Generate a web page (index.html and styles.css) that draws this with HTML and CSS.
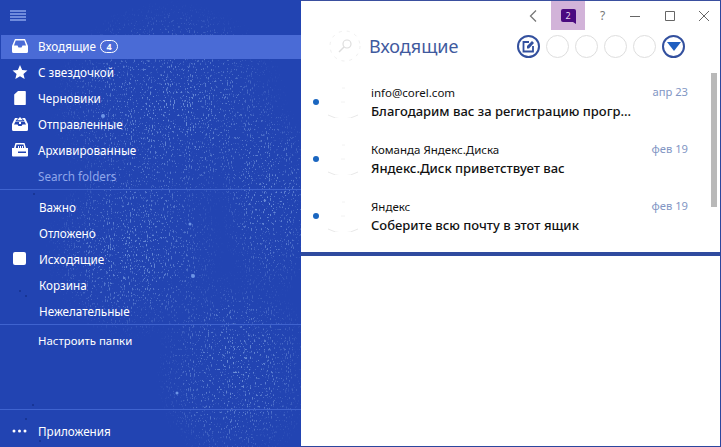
FILE: index.html
```html
<!DOCTYPE html>
<html lang="ru">
<head>
    <meta charset="UTF-8">
    <meta name="viewport" content="width=device-width, initial-scale=1.0">
    <title>Входящие</title>
    <link rel="stylesheet" href="styles.css">
</head>
<body>
<div class="app">

    <aside class="sidebar">
        <svg class="texture" width="301" height="447" aria-hidden="true">
            <defs>
                <filter id="speckle" x="0" y="0" width="100%" height="100%">
                    <feTurbulence type="fractalNoise" baseFrequency="0.95 0.35" numOctaves="2" seed="7"/>
                    <feColorMatrix values="0 0 0 0 0.36  0 0 0 0 0.56  0 0 0 0 0.9  0 0 0 9 -5.6"/>
                </filter>
                <radialGradient id="fade">
                    <stop offset="0" stop-color="#fff"/>
                    <stop offset="0.6" stop-color="#fff" stop-opacity="0.6"/>
                    <stop offset="1" stop-color="#fff" stop-opacity="0"/>
                </radialGradient>
                <mask id="patches">
                    <ellipse cx="170" cy="110" rx="120" ry="110" fill="url(#fade)"/>
                    <ellipse cx="135" cy="250" rx="90" ry="90" fill="url(#fade)"/>
                    <ellipse cx="235" cy="370" rx="80" ry="100" fill="url(#fade)"/>
                    <ellipse cx="270" cy="200" rx="50" ry="100" fill="url(#fade)"/>
                </mask>
            </defs>
            <rect width="301" height="447" filter="url(#speckle)" mask="url(#patches)" opacity="0.6"/>
            <g fill="#6d95e6">
                <circle cx="103" cy="116" r="2"/>
                <circle cx="190" cy="224" r="1.500"/>
                <circle cx="193" cy="276" r="2"/>
                <circle cx="177" cy="393" r="1.500"/>
            </g>
            <g fill="#16308c">
                <circle cx="20" cy="291" r="1"/>
                <circle cx="26" cy="296" r="1"/>
                <circle cx="33" cy="405" r="1"/>
                <circle cx="26" cy="419" r="1"/>
                <circle cx="40" cy="441" r="1"/>
                <circle cx="34" cy="194" r="1"/>
            </g>
        </svg>

        <div class="menu-btn"><span></span><span></span><span></span><span></span></div>

        <nav class="folders">
            <div class="row active">
                <svg class="ico" viewBox="0 0 16 14"><path d="M3 0h10l3 7v5.500a1.500 1.500 0 0 1-1.500 1.500h-13A1.500 1.500 0 0 1 0 12.500V7z M3.700 1.500 2 6.500h3.500l1 2h3l1-2H14l-1.700-5z" fill="#fff" fill-rule="evenodd"/></svg>
                <span>Входящие</span>
                <b class="count">4</b>
            </div>
            <div class="row">
                <svg class="ico" viewBox="0 0 16 15"><path d="M8 0l2.300 5.300 5.700.5-4.300 3.800 1.300 5.400L8 12.100 3 15l1.300-5.400L0 5.800l5.700-.5z" fill="#fff"/></svg>
                <span>С звездочкой</span>
            </div>
            <div class="row">
                <svg class="ico" viewBox="0 0 16 14"><path d="M6 0h7a.8.800 0 0 1 .8.800v12.400a.8.800 0 0 1-.8.800H3a.8.800 0 0 1-.8-.800V3.500z" fill="#fff"/></svg>
                <span>Черновики</span>
            </div>
            <div class="row">
                <svg class="ico" viewBox="0 0 16 14"><path d="M3 1h3L3.500 4 7 4v3h2V4h3.500L10 1h3l3 6v5.500a1.500 1.500 0 0 1-1.500 1.500h-13A1.500 1.500 0 0 1 0 12.500V7z M8 0l3 3.200H5z M2 7.500h3.500l1 1.500h3l1-1.500H14L12.500 4.500h-9z" fill="#fff" fill-rule="evenodd"/></svg>
                <span>Отправленные</span>
            </div>
            <div class="row">
                <svg class="ico" viewBox="0 0 16 14"><path d="M3.500 0h9L14 5h2v7.500a1 1 0 0 1-1 1H1a1 1 0 0 1-1-1V5h2z M4.500 1.500 3.800 5H6V3h1v2h1V3h1v2h1V3h1v2h1.200l-.7-3.500z M6 8.500V10h8V8.500z" fill="#fff" fill-rule="evenodd"/></svg>
                <span>Архивированные</span>
            </div>
            <div class="row search">Search folders</div>
        </nav>

        <nav class="folders extra">
            <div class="row"><i class="ico"></i><span>Важно</span></div>
            <div class="row"><i class="ico"></i><span>Отложено</span></div>
            <div class="row"><i class="ico square"></i><span>Исходящие</span></div>
            <div class="row"><i class="ico"></i><span>Корзина</span></div>
            <div class="row"><i class="ico"></i><span>Нежелательные</span></div>
        </nav>

        <div class="setup">
            <div class="row"><i class="ico"></i><span>Настроить папки</span></div>
        </div>

        <div class="apps">
            <div class="row">
                <svg class="ico" viewBox="0 0 16 4"><circle cx="2" cy="2" r="1.500" fill="#fff"/><circle cx="7.500" cy="2" r="1.500" fill="#fff"/><circle cx="13" cy="2" r="1.500" fill="#fff"/></svg>
                <span>Приложения</span>
            </div>
        </div>
    </aside>

    <main class="content">
        <div class="titlebar">
            <svg class="tb-icon back" viewBox="0 0 10 14"><path d="M8 1.500 2.500 7 8 12.500" fill="none" stroke="#777" stroke-width="1.300"/></svg>
            <div class="chat">
                <div class="bubble">2</div>
            </div>
            <span class="help">?</span>
            <svg class="tb-icon min" viewBox="0 0 12 12"><path d="M1 6.500h10" stroke="#666" stroke-width="1"/></svg>
            <svg class="tb-icon max" viewBox="0 0 12 12"><path d="M1.500 1.500h9v9h-9z" fill="none" stroke="#666" stroke-width="1"/></svg>
            <svg class="tb-icon close" viewBox="0 0 12 12"><path d="M1 1l10 10M11 1 1 11" stroke="#666" stroke-width="1"/></svg>
        </div>

        <header class="head">
            <svg class="avatar-search" width="32" height="32" viewBox="0 0 32 32">
                <circle cx="16" cy="16" r="15" fill="none" stroke="#f0f0f0" stroke-width="1" stroke-dasharray="3 5"/>
                <circle cx="18" cy="14" r="4" fill="none" stroke="#ddd" stroke-width="1.200"/>
                <path d="M15 17l-5 5" stroke="#ddd" stroke-width="1.500"/>
            </svg>
            <h1>Входящие</h1>
            <div class="tools">
                <div class="tool on">
                    <svg width="13" height="13" viewBox="0 0 13 13"><path d="M7 2H1.500v9.500H11V6" fill="none" stroke="#33509e" stroke-width="1.800"/><path d="M5 8.500V6l5-5 2 2-5 5.500z" fill="#33509e"/></svg>
                </div>
                <div class="tool"></div>
                <div class="tool"></div>
                <div class="tool"></div>
                <div class="tool"></div>
                <div class="tool on">
                    <svg width="14" height="9" viewBox="0 0 14 9"><path d="M0 0h14L7 9z" fill="#1f5fc0"/></svg>
                </div>
            </div>
        </header>

        <div class="list">
            <div class="mail">
                <i class="unread"></i>
                <svg class="avatar" viewBox="0 0 32 32"><path d="M1 29q15 8 30 0" fill="none" stroke="#e8e8e8"/><path d="M15 2h3M14 16h4" stroke="#f2f2f2"/></svg>
                <div class="mail-text">
                    <div class="sender">info@corel.com</div>
                    <div class="subject">Благодарим вас за регистрацию прогр...</div>
                </div>
                <time>апр 23</time>
            </div>
            <div class="mail">
                <i class="unread"></i>
                <svg class="avatar" viewBox="0 0 32 32"><path d="M1 29q15 8 30 0" fill="none" stroke="#e8e8e8"/><path d="M15 2h3M14 16h4" stroke="#f2f2f2"/></svg>
                <div class="mail-text">
                    <div class="sender">Команда Яндекс.Диска</div>
                    <div class="subject">Яндекс.Диск приветствует вас</div>
                </div>
                <time>фев 19</time>
            </div>
            <div class="mail">
                <i class="unread"></i>
                <svg class="avatar" viewBox="0 0 32 32"><path d="M1 29q15 8 30 0" fill="none" stroke="#e8e8e8"/><path d="M15 2h3M14 16h4" stroke="#f2f2f2"/></svg>
                <div class="mail-text">
                    <div class="sender">Яндекс</div>
                    <div class="subject">Соберите всю почту в этот ящик</div>
                </div>
                <time>фев 19</time>
            </div>
            <div class="scroll"></div>
        </div>

        <div class="preview"></div>
    </main>

</div>
</body>
</html>
```

FILE: styles.css
```css
* {
    box-sizing: border-box;
}

html, body {
    margin: 0;
    height: 100%;
    overflow: hidden;
}

body {
    font-family: "Noto Sans", "Open Sans", sans-serif;
}

.app {
    display: flex;
    width: 721px;
    height: 447px;
}

/* left column */
.sidebar {
    position: relative;
    display: flex;
    flex-direction: column;
    width: 301px;
    height: 447px;
    background-color: #2244b2;
    color: #fff;
    font-size: 11.7px;
}

.texture {
    position: absolute;
    top: 0;
    left: 0;
}

.sidebar > div, .sidebar > nav {
    position: relative;
}

.menu-btn {
    display: flex;
    flex-direction: column;
    gap: 1px;
    width: 16px;
    height: 34px;
    margin-left: 10px;
    padding-top: 10px;
}

.menu-btn span {
    height: 2px;
    background-color: #6f8bdc;
}

.row {
    display: flex;
    align-items: center;
    height: 26px;
    padding-left: 10px;
    padding-bottom: 2px;
}

.row.active {
    height: 24px;
    margin: 1px 0 1px 1px;
    padding-left: 9px;
    background-color: #4a6bd6;
}

.row span {
    white-space: nowrap;
}

.ico {
    flex: none;
    width: 16px;
    height: 14px;
    margin-left: 2px;
    margin-right: 10px;
}

.count {
    display: block;
    width: 18px;
    height: 13px;
    margin-left: 4px;
    border: 1px solid #fff;
    border-radius: 7px;
    font-size: 9px;
    line-height: 11px;
    text-align: center;
}

.row.search {
    height: 25px;
    padding-left: 38px;
    padding-bottom: 2px;
    color: #8fa6ea;
}

.extra {
    height: 135px;
    border-top: 1px solid #3f63cf;
    padding-top: 4px;
}

.extra .row {
    padding-bottom: 1px;
}

.extra .ico {
    margin-right: 11px;
}

.extra .ico.square {
    background-color: #fff;
    border-radius: 2px;
    width: 13px;
    height: 13px;
    margin-left: 3px;
    margin-right: 13px;
}

.setup {
    height: 85px;
    border-top: 1px solid #3f63cf;
    padding-top: 2px;
    font-size: 11.4px;
}

.setup .row {
    padding-bottom: 0;
}

.apps {
    height: 37px;
    border-top: 1px solid #3f63cf;
    padding-top: 8px;
}

.apps .row {
    padding-bottom: 0;
}

/* right column */
.content {
    display: flex;
    flex-direction: column;
    width: 420px;
    height: 447px;
    background-color: #fff;
    border-top: 1px solid #3a4f9f;
    border-right: 1px solid #2c469e;
    border-bottom: 1px solid #2c469e;
}

.titlebar {
    display: flex;
    align-items: center;
    height: 29px;
    flex: none;
}

.tb-icon {
    flex: none;
    width: 12px;
    height: 12px;
}

.back {
    margin-left: 226px;
    height: 14px;
}

.chat {
    display: flex;
    align-items: center;
    justify-content: center;
    width: 34px;
    height: 29px;
    margin-left: 12px;
    background-color: #d2b3d9;
}

.bubble {
    position: relative;
    width: 15px;
    height: 13px;
    margin-bottom: 1px;
    background-color: #4a0a80;
    border-radius: 2px 2px 0 2px;
    color: #e8d8f0;
    font-size: 9px;
    line-height: 13px;
    text-align: center;
}

.bubble::after {
    content: "";
    position: absolute;
    right: 0;
    bottom: -2px;
    border-top: 2px solid #4a0a80;
    border-left: 3px solid transparent;
}

.help {
    width: 10px;
    margin-left: 15px;
    color: #777;
    font-size: 12px;
}

.min {
    margin-left: 19px;
}

.max {
    margin-left: 23px;
}

.close {
    margin-left: 22px;
}

.head {
    display: flex;
    align-items: center;
    height: 32px;
    margin-bottom: 2px;
    flex: none;
    padding-left: 28px;
}

.avatar-search {
    flex: none;
}

.head h1 {
    margin: 0 0 0 8px;
    color: #3f5a9e;
    font-size: 18px;
    font-weight: 400;
}

.tools {
    display: flex;
    gap: 6px;
    margin-left: 59px;
}

.tool {
    display: flex;
    align-items: center;
    justify-content: center;
    width: 23px;
    height: 23px;
    border: 1px solid #dedede;
    border-radius: 50%;
}

.tool.on {
    border: 2px solid #33509e;
}

.list {
    position: relative;
    flex: none;
    display: flex;
    flex-direction: column;
    height: 192px;
    padding-top: 8px;
    border-bottom: 4px solid #2f4b9f;
}

.scroll {
    position: absolute;
    top: 9px;
    right: 3px;
    width: 6px;
    height: 134px;
    background-color: #b9b9b9;
}

.mail {
    display: flex;
    align-items: center;
    height: 57px;
    padding-left: 12px;
    padding-top: 2px;
}

.unread {
    flex: none;
    width: 6px;
    height: 6px;
    border-radius: 50%;
    background-color: #1a66c0;
}

.avatar {
    flex: none;
    width: 32px;
    height: 32px;
    margin-left: 8px;
}

.mail-text {
    flex: 1;
    min-width: 0;
    margin-left: 12px;
    padding-top: 2px;
}

.sender {
    color: #111;
    font-size: 11.5px;
    line-height: 17px;
}

.subject {
    color: #111;
    font-size: 13px;
    font-weight: 500;
    line-height: 20px;
    white-space: nowrap;
}

.mail time {
    flex: none;
    align-self: flex-start;
    margin-top: 10px;
    margin-right: 32px;
    color: #8296c4;
    font-size: 11.2px;
}

.preview {
    flex: 1;
    background-color: #fff;
}
```
